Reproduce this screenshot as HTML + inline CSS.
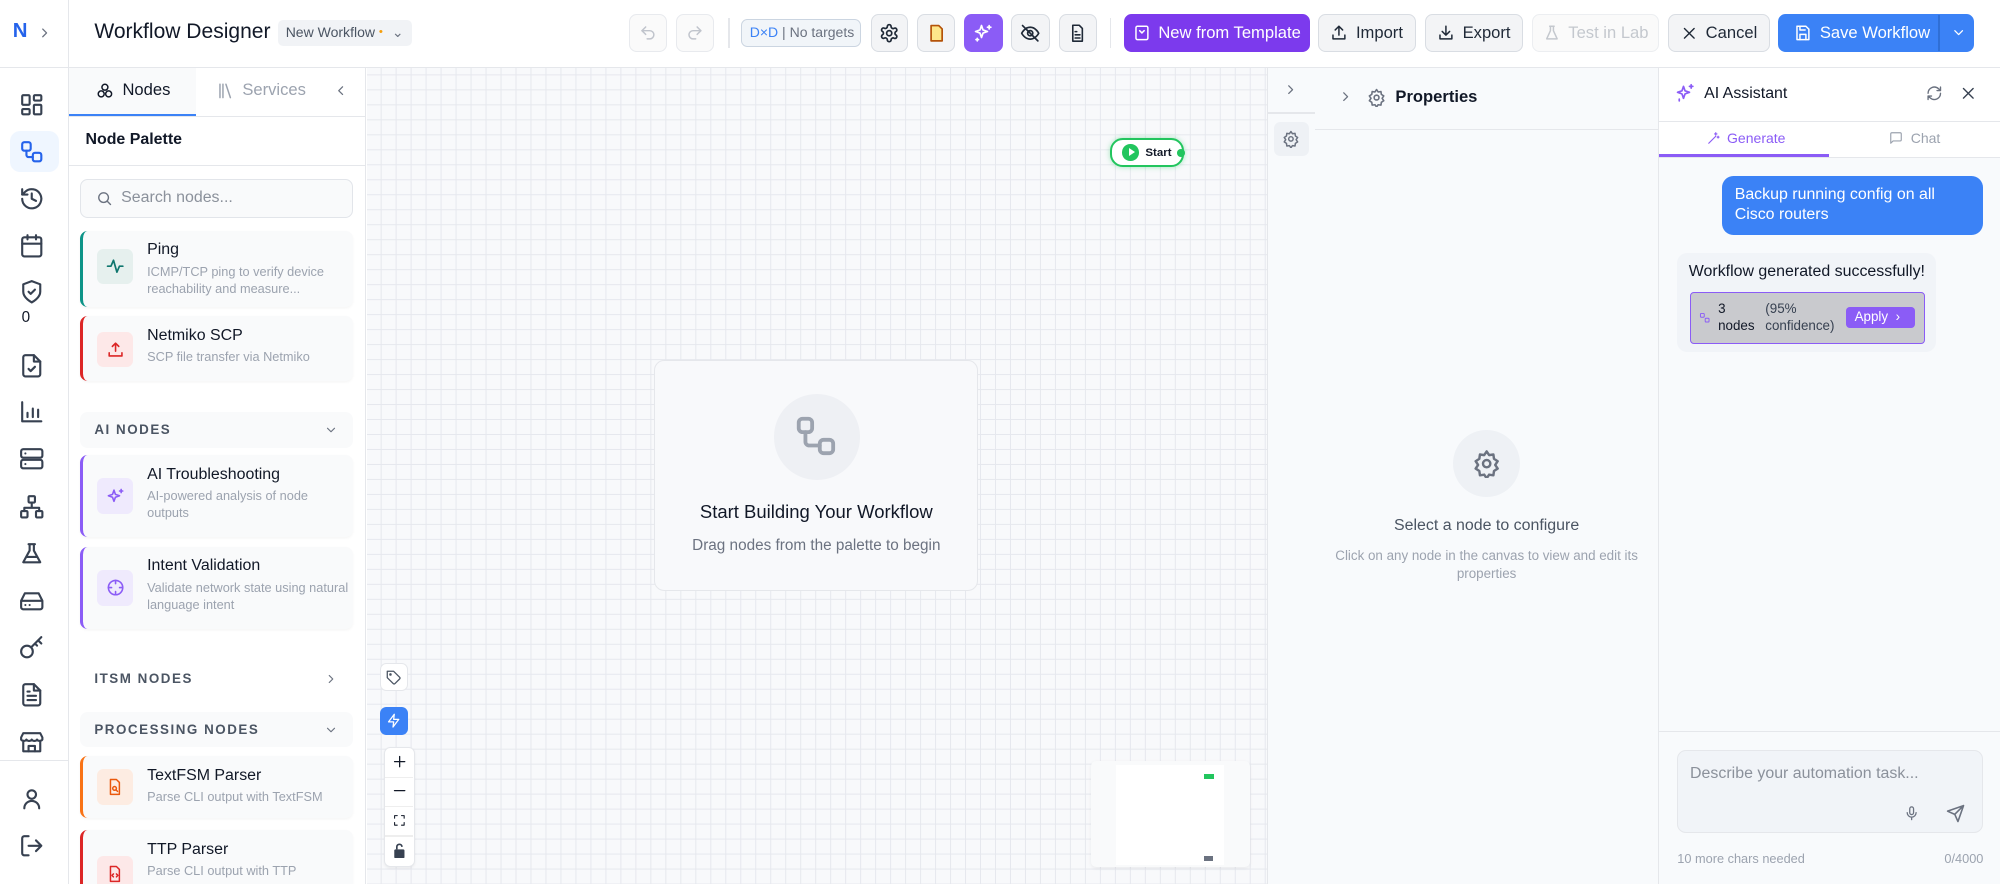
<!DOCTYPE html>
<html><head><meta charset="utf-8">
<style>
*{box-sizing:border-box;margin:0;padding:0}
html,body{width:2000px;height:884px;overflow:hidden;background:#fff}
#root{zoom:1.27551;width:1568px;height:693px;position:relative;font-family:"Liberation Sans",sans-serif;color:#111827;overflow:hidden}
.a{position:absolute}
svg{display:block}
.ic{fill:none;stroke:currentColor;stroke-width:2;stroke-linecap:round;stroke-linejoin:round}
.btn{position:absolute;top:11px;height:30px;border:1px solid #d9dde3;border-radius:6px;background:#f3f4f6;display:flex;align-items:center;justify-content:center;gap:6px;font-size:13px;color:#1f2937}
.side{position:absolute;left:15px;width:20px;height:20px;color:#374151}
.card{position:absolute;left:63px;width:214px;background:#f9fafb;border-radius:6px;border-left:3px solid;box-shadow:0 1px 2px rgba(0,0,0,.04)}
.card .ib{position:absolute;left:11px;top:14px;width:28px;height:28px;border-radius:5px;display:flex;align-items:center;justify-content:center}
.card .t{position:absolute;left:50px;top:8px;font-size:12.5px;color:#111827}
.card .d{position:absolute;left:50px;top:25px;font-size:10px;color:#9ca3af;line-height:13.5px;width:160px}
.sec{position:absolute;left:63px;width:214px;height:28px;border-radius:6px;font-size:10.5px;letter-spacing:1.2px;color:#4b5563;font-weight:bold;padding-left:11px;line-height:28px}
</style></head><body><div id="root">

<!-- header -->
<div class="a" style="left:0;top:0;width:1568px;height:53px;border-bottom:1px solid #e5e7eb;background:#fff"></div>
<div class="a" style="left:10px;top:16px;font-size:16px;font-weight:bold;color:#2563eb">N</div>
<svg class="a ic" style="left:29px;top:19px;color:#6b7280" width="12" height="14" viewBox="0 0 24 24"><path d="M9 6l6 6-6 6"/></svg>
<div class="a" style="left:53px;top:0;width:1px;height:693px;background:#e5e7eb"></div>
<div class="a" style="left:74px;top:16px;font-size:16.5px;color:#111827">Workflow Designer</div>
<div class="a" style="left:218px;top:16px;width:105px;height:20px;background:#f1f3f6;border-radius:4px;font-size:11px;color:#4b5563;line-height:20px;padding-left:6px">New Workflow <span style="color:#f59e0b;font-size:9px;vertical-align:top">•</span> <span style="color:#6b7280;margin-left:4px">⌄</span></div>

<div class="btn" style="left:493px;width:30px;background:#fafafa;border-color:#e8eaee;color:#c0c4cc"><svg class="ic" width="14" height="14" viewBox="0 0 24 24"><path d="M9 14L4 9l5-5"/><path d="M4 9h10.5a5.5 5.5 0 0 1 0 11H11"/></svg></div>
<div class="btn" style="left:530px;width:30px;background:#fafafa;border-color:#e8eaee;color:#c0c4cc"><svg class="ic" width="14" height="14" viewBox="0 0 24 24"><path d="M15 14l5-5-5-5"/><path d="M20 9H9.5a5.5 5.5 0 0 0 0 11H13"/></svg></div>
<div class="a" style="left:571px;top:14px;width:1px;height:24px;background:#e5e7eb"></div>
<div class="a" style="left:581px;top:15px;width:94px;height:22px;border:1px solid #cbd5e1;border-radius:5px;background:#f1f5f9;font-size:11px;line-height:20px;padding-left:6px;color:#6b7280"><span style="color:#3b82f6">D×D</span> | No targets</div>
<div class="btn" style="left:683px;width:29px"><svg class="ic" width="16" height="16" viewBox="0 0 24 24"><circle cx="12" cy="12" r="3"/><path d="M12.2 2h-.4a2 2 0 0 0-2 2v.2a2 2 0 0 1-1 1.7l-.4.3a2 2 0 0 1-2 0l-.2-.1a2 2 0 0 0-2.7.7l-.2.4a2 2 0 0 0 .7 2.7l.2.1a2 2 0 0 1 1 1.7v.5a2 2 0 0 1-1 1.7l-.2.1a2 2 0 0 0-.7 2.7l.2.4a2 2 0 0 0 2.7.7l.2-.1a2 2 0 0 1 2 0l.4.3a2 2 0 0 1 1 1.7V20a2 2 0 0 0 2 2h.4a2 2 0 0 0 2-2v-.2a2 2 0 0 1 1-1.700l.4-.3a2 2 0 0 1 2 0l.2.1a2 2 0 0 0 2.7-.7l.2-.4a2 2 0 0 0-.7-2.7l-.2-.1a2 2 0 0 1-1-1.7v-.5a2 2 0 0 1 1-1.7l.2-.1a2 2 0 0 0 .7-2.7l-.2-.4a2 2 0 0 0-2.7-.7l-.2.1a2 2 0 0 1-2 0l-.4-.3a2 2 0 0 1-1-1.7V4a2 2 0 0 0-2-2z"/></svg></div>
<div class="btn" style="left:719px;width:30px"><svg width="16" height="16" viewBox="0 0 24 24"><path d="M6 3h9l4 4v14H6z" fill="#fde68a" stroke="#b45309" stroke-width="2" stroke-linejoin="round"/></svg></div>
<div class="btn" style="left:756px;width:30px;background:#8b5cf6;border-color:#8b5cf6;color:#fff"><svg class="ic" width="16" height="16" viewBox="0 0 24 24"><path d="M10 3l1.8 5.2L17 10l-5.2 1.8L10 17l-1.8-5.2L3 10l5.2-1.8z"/><path d="M19 3v4M17 5h4M5 18v3M3.5 19.5h3"/></svg></div>
<div class="btn" style="left:793px;width:30px"><svg class="ic" width="16" height="16" viewBox="0 0 24 24"><path d="M2 12s3.5-7 10-7 10 7 10 7-3.5 7-10 7S2 12 2 12z"/><circle cx="12" cy="12" r="3"/><path d="M3 3l18 18"/></svg></div>
<div class="btn" style="left:830px;width:30px"><svg class="ic" width="15" height="16" viewBox="0 0 24 24"><path d="M14 2H6v20h12V6z"/><path d="M9 10h2M9 14h6M9 18h6"/></svg></div>
<div class="a" style="left:870px;top:14px;width:1px;height:24px;background:#e5e7eb"></div>
<div class="btn" style="left:881px;width:146px;background:#7c3aed;border-color:#7c3aed;color:#fff"><svg class="ic" width="14" height="14" viewBox="0 0 24 24"><rect x="4" y="3" width="16" height="18" rx="2"/><path d="M9 9l3 3 3-3"/></svg>New from Template</div>
<div class="btn" style="left:1033px;width:77px"><svg class="ic" width="14" height="14" viewBox="0 0 24 24"><path d="M12 15V3M7 8l5-5 5 5M4 15v5h16v-5"/></svg>Import</div>
<div class="btn" style="left:1117px;width:77px"><svg class="ic" width="14" height="14" viewBox="0 0 24 24"><path d="M12 3v12M7 10l5 5 5-5M4 15v5h16v-5"/></svg>Export</div>
<div class="btn" style="left:1201px;width:100px;background:#fafafa;border-color:#eceef1;color:#c4c8ce"><svg class="ic" width="14" height="14" viewBox="0 0 24 24"><path d="M9 3h6M10 3v6L5 20h14L14 9V3"/></svg>Test in Lab</div>
<div class="btn" style="left:1308px;width:80px"><svg class="ic" width="13" height="13" viewBox="0 0 24 24"><path d="M5 5l14 14M19 5L5 19"/></svg>Cancel</div>
<div class="btn" style="left:1394px;width:154px;background:#3b82f6;border-color:#3b82f6;color:#fff;justify-content:flex-start;padding-left:12px"><svg class="ic" width="14" height="14" viewBox="0 0 24 24"><path d="M5 3h11l4 4v14H4V3z"/><path d="M8 3v5h7M8 21v-7h8v7"/></svg>Save Workflow<div class="a" style="left:125px;top:0;width:1px;height:28px;background:#2f6fd6"></div><svg class="a ic" style="left:135px;top:8px" width="12" height="12" viewBox="0 0 24 24"><path d="M6 9l6 6 6-6"/></svg></div>

<!-- left sidebar -->
<div class="a" style="left:8px;top:103px;width:38px;height:32px;background:#eff6ff;border-radius:8px"></div>
<svg class="side ic" style="top:72px" viewBox="0 0 24 24"><rect x="3" y="3" width="7" height="9" rx="1"/><rect x="14" y="3" width="7" height="5" rx="1"/><rect x="14" y="12" width="7" height="9" rx="1"/><rect x="3" y="16" width="7" height="5" rx="1"/></svg>
<svg class="side ic" style="top:109px;color:#2563eb" viewBox="0 0 24 24"><rect x="3" y="3" width="8" height="8" rx="2"/><rect x="13" y="13" width="8" height="8" rx="2"/><path d="M7 11v4a2 2 0 0 0 2 2h4"/></svg>
<svg class="side ic" style="top:146px" viewBox="0 0 24 24"><path d="M3 12a9 9 0 1 0 3-6.7L3 8"/><path d="M3 3v5h5M12 7v5l4 2"/></svg>
<svg class="side ic" style="top:183px" viewBox="0 0 24 24"><rect x="3" y="4" width="18" height="18" rx="2"/><path d="M16 2v4M8 2v4M3 10h18"/></svg>
<svg class="side ic" style="top:219px" viewBox="0 0 24 24"><path d="M12 22s8-4 8-10V5l-8-3-8 3v7c0 6 8 10 8 10z"/><path d="M9 12l2 2 4-4"/></svg>
<div class="a" style="left:17px;top:242px;font-size:12px;color:#111827">0</div>
<svg class="side ic" style="top:277px" viewBox="0 0 24 24"><path d="M14 2H6a2 2 0 0 0-2 2v16a2 2 0 0 0 2 2h12a2 2 0 0 0 2-2V8z"/><path d="M14 2v6h6M9 15l2 2 4-4"/></svg>
<svg class="side ic" style="top:313px" viewBox="0 0 24 24"><path d="M3 3v18h18M8 17v-4M13 17V9M18 17v-7"/></svg>
<svg class="side ic" style="top:350px" viewBox="0 0 24 24"><rect x="2" y="3" width="20" height="8" rx="2"/><rect x="2" y="13" width="20" height="8" rx="2"/><path d="M6 7h.01M6 17h.01"/></svg>
<svg class="side ic" style="top:387px" viewBox="0 0 24 24"><rect x="9" y="2" width="6" height="6" rx="1"/><rect x="2" y="16" width="6" height="6" rx="1"/><rect x="16" y="16" width="6" height="6" rx="1"/><path d="M5 16v-3h14v3M12 8v5"/></svg>
<svg class="side ic" style="top:424px" viewBox="0 0 24 24"><path d="M9 3h6M10 3v6L4 20h16L14 9V3M7 15h10"/></svg>
<svg class="side ic" style="top:461px" viewBox="0 0 24 24"><path d="M22 12H2M5.5 5h13L22 12v6a2 2 0 0 1-2 2H4a2 2 0 0 1-2-2v-6z"/><path d="M6 16h.01M10 16h.01"/></svg>
<svg class="side ic" style="top:498px" viewBox="0 0 24 24"><circle cx="7.5" cy="15.5" r="5.5"/><path d="M11.5 11.5L21 2M18 5l3 3M15 8l2 2"/></svg>
<svg class="side ic" style="top:535px" viewBox="0 0 24 24"><path d="M14 2H6a2 2 0 0 0-2 2v16a2 2 0 0 0 2 2h12a2 2 0 0 0 2-2V8z"/><path d="M14 2v6h6M8 13h8M8 17h8M8 9h2"/></svg>
<svg class="side ic" style="top:572px" viewBox="0 0 24 24"><path d="M4 10v10h16V10M2 7l2-4h16l2 4v2a3 3 0 0 1-5 0 3 3 0 0 1-5 0 3 3 0 0 1-5 0 3 3 0 0 1-5 0z"/><path d="M9 20v-5h6v5"/></svg>
<div class="a" style="left:0;top:596px;width:53px;height:1px;background:#e5e7eb"></div>
<svg class="side ic" style="top:616px" viewBox="0 0 24 24"><circle cx="12" cy="8" r="4"/><path d="M5 21a7 7 0 0 1 14 0"/></svg>
<svg class="side ic" style="top:653px" viewBox="0 0 24 24"><path d="M9 21H5a2 2 0 0 1-2-2V5a2 2 0 0 1 2-2h4M16 17l5-5-5-5M21 12H9"/></svg>

<!-- palette -->
<div class="a" style="left:54px;top:53px;width:233px;height:640px;background:#fff;border-right:1px solid #e5e7eb"></div>
<div class="a" style="left:54px;top:53px;width:100px;height:39px;background:#f9fafb"></div>
<div class="a" style="left:54px;top:89px;width:100px;height:2px;background:#3b82f6"></div>
<div class="a" style="left:54px;top:91px;width:233px;height:1px;background:#e5e7eb"></div>
<svg class="a ic" style="left:75px;top:64px;color:#111827" width="14" height="14" viewBox="0 0 24 24"><circle cx="12" cy="7" r="4"/><circle cx="7" cy="16" r="4"/><circle cx="17" cy="16" r="4"/></svg>
<div class="a" style="left:96px;top:63px;font-size:13px;color:#111827">Nodes</div>
<svg class="a ic" style="left:170px;top:64px;color:#9ca3af" width="14" height="14" viewBox="0 0 24 24"><path d="M4 3v18M8 3v18M12 3l6 18"/></svg>
<div class="a" style="left:190px;top:63px;font-size:13px;color:#9ca3af">Services</div>
<svg class="a ic" style="left:261px;top:65px;color:#6b7280" width="12" height="12" viewBox="0 0 24 24"><path d="M15 6l-6 6 6 6"/></svg>
<div class="a" style="left:67px;top:103px;font-size:12.5px;font-weight:bold">Node Palette</div>
<div class="a" style="left:54px;top:129px;width:233px;height:1px;background:#e5e7eb"></div>
<div class="a" style="left:63px;top:140px;width:214px;height:31px;border:1px solid #e2e5ea;border-radius:6px;background:#f9fafb"></div>
<svg class="a ic" style="left:75px;top:149px;color:#6b7280" width="13" height="13" viewBox="0 0 24 24"><circle cx="11" cy="11" r="7"/><path d="M21 21l-4.5-4.5"/></svg>
<div class="a" style="left:95px;top:148px;font-size:12.5px;color:#8b919b">Search nodes...</div>

<div class="card" style="top:181px;height:60px;border-color:#0d9488"><div class="ib" style="background:#e6f0ee;color:#0f766e"><svg class="ic" width="16" height="16" viewBox="0 0 24 24"><path d="M3 12h4l3-7 4 14 3-7h4"/></svg></div><div class="t">Ping</div><div class="d">ICMP/TCP ping to verify device reachability and measure...</div></div>
<div class="card" style="top:248px;height:51px;border-color:#dc2626"><div class="ib" style="top:12px;background:#fde8e8;color:#dc2626"><svg class="ic" width="15" height="15" viewBox="0 0 24 24"><path d="M12 14V4M8 8l4-4 4 4M4 16v4h16v-4"/></svg></div><div class="t">Netmiko SCP</div><div class="d">SCP file transfer via Netmiko</div></div>
<div class="sec" style="top:323px;background:#f9fafb">AI NODES<svg class="a ic" style="left:191px;top:9px;color:#6b7280" width="11" height="11" viewBox="0 0 24 24"><path d="M6 9l6 6 6-6"/></svg></div>
<div class="card" style="top:357px;height:64px;border-color:#8b5cf6"><div class="ib" style="top:18px;background:#efeafd;color:#8b5cf6"><svg class="ic" width="15" height="15" viewBox="0 0 24 24"><path d="M10 4l1.8 5.2L17 11l-5.2 1.8L10 18l-1.8-5.2L3 11l5.2-1.8z"/><path d="M19 3v4M17 5h4"/></svg></div><div class="t">AI Troubleshooting</div><div class="d">AI-powered analysis of node outputs</div></div>
<div class="card" style="top:429px;height:64px;border-color:#8b5cf6"><div class="ib" style="top:18px;background:#efeafd;color:#8b5cf6"><svg class="ic" width="15" height="15" viewBox="0 0 24 24"><circle cx="12" cy="12" r="9"/><path d="M12 3v4M12 17v4M3 12h4M17 12h4"/></svg></div><div class="t">Intent Validation</div><div class="d">Validate network state using natural language intent</div></div>
<div class="sec" style="top:518px">ITSM NODES<svg class="a ic" style="left:191px;top:9px;color:#6b7280" width="11" height="11" viewBox="0 0 24 24"><path d="M9 6l6 6-6 6"/></svg></div>
<div class="sec" style="top:558px;background:#f9fafb">PROCESSING NODES<svg class="a ic" style="left:191px;top:9px;color:#6b7280" width="11" height="11" viewBox="0 0 24 24"><path d="M6 9l6 6 6-6"/></svg></div>
<div class="card" style="top:593px;height:48px;border-color:#f97316"><div class="ib" style="top:10px;background:#fdece2;color:#ea580c"><svg class="ic" width="14" height="14" viewBox="0 0 24 24"><path d="M14 2H6v20h12V6z"/><circle cx="11.5" cy="14" r="2.5"/><path d="M13.5 16l2 2"/></svg></div><div class="t">TextFSM Parser</div><div class="d">Parse CLI output with TextFSM</div></div>
<div class="card" style="top:651px;height:50px;border-color:#dc2626"><div class="ib" style="top:20px;background:#fde8e8;color:#dc2626"><svg class="ic" width="14" height="14" viewBox="0 0 24 24"><path d="M14 2H6v20h12V6z"/><path d="M10 12l-2 2 2 2M14 12l2 2-2 2"/></svg></div><div class="t">TTP Parser</div><div class="d">Parse CLI output with TTP</div></div>

<!-- canvas -->
<div class="a" style="left:288px;top:53px;width:705px;height:640px;background-color:#f8f9fb;background-image:linear-gradient(#e6e8ee 0.8px,transparent 0.8px),linear-gradient(90deg,#e6e8ee 0.8px,transparent 0.8px);background-size:11.76px 11.76px;background-position:10.7px 5px"></div>
<div class="a" style="left:513px;top:282px;width:254px;height:181px;background:#f8f9fb;border:1px solid #e5e7eb;border-radius:8px"></div>
<div class="a" style="left:607px;top:309px;width:67px;height:67px;border-radius:50%;background:#eef0f4"></div>
<svg class="a ic" style="left:622px;top:324px;color:#9ca3af" width="36" height="36" viewBox="0 0 24 24"><rect x="3" y="3" width="7" height="7" rx="2"/><rect x="14" y="14" width="7" height="7" rx="2"/><path d="M6.5 10v5a2 2 0 0 0 2 2H14"/></svg>
<div class="a" style="left:513px;top:393px;width:254px;text-align:center;font-size:14.5px;color:#111827">Start Building Your Workflow</div>
<div class="a" style="left:513px;top:421px;width:254px;text-align:center;font-size:12px;color:#6b7280">Drag nodes from the palette to begin</div>
<div class="a" style="left:870px;top:108px;width:58px;height:23px;border:2px solid #22c55e;border-radius:10px;background:#fff;box-shadow:0 0 4px rgba(34,197,94,.4)"></div>
<div class="a" style="left:880px;top:113px;width:13px;height:13px;border-radius:50%;background:#22c55e"></div>
<div class="a" style="left:885px;top:116px;width:0;height:0;border-left:5px solid #fff;border-top:3.5px solid transparent;border-bottom:3.5px solid transparent"></div>
<div class="a" style="left:898px;top:115px;font-size:9px;line-height:10px;font-weight:bold;color:#111827">Start</div>
<div class="a" style="left:923px;top:117px;width:6px;height:6px;border-radius:50%;background:#22c55e"></div>
<div class="a" style="left:298px;top:520px;width:22px;height:22px;background:#fff;border:1px solid #e5e7eb;border-radius:5px"></div>
<svg class="a ic" style="left:303px;top:525px;color:#4b5563" width="12" height="12" viewBox="0 0 24 24"><path d="M12 2H2v10l9.3 9.3a2 2 0 0 0 2.8 0l7.2-7.2a2 2 0 0 0 0-2.8z"/><circle cx="7" cy="7" r="1"/></svg>
<div class="a" style="left:298px;top:554px;width:22px;height:22px;background:#3b82f6;border-radius:5px"></div>
<svg class="a ic" style="left:303px;top:559px;color:#fff" width="12" height="12" viewBox="0 0 24 24"><path d="M13 2L4 14h8l-1 8 9-12h-8z"/></svg>
<div class="a" style="left:301px;top:586px;width:24px;height:94px;background:#fff;border:1px solid #e5e7eb;border-radius:5px;box-shadow:0 1px 2px rgba(0,0,0,.06)"></div>
<div class="a" style="left:302px;top:609px;width:22px;height:1px;background:#eee"></div>
<div class="a" style="left:302px;top:632px;width:22px;height:1px;background:#eee"></div>
<div class="a" style="left:302px;top:655px;width:22px;height:1px;background:#eee"></div>
<svg class="a ic" style="left:307px;top:591px;color:#111827" width="12" height="12" viewBox="0 0 24 24"><path d="M12 4v16M4 12h16"/></svg>
<svg class="a ic" style="left:307px;top:614px;color:#111827" width="12" height="12" viewBox="0 0 24 24"><path d="M4 12h16"/></svg>
<svg class="a ic" style="left:308px;top:638px;color:#111827" width="10" height="10" viewBox="0 0 24 24"><path d="M3 8V3h5M16 3h5v5M21 16v5h-5M8 21H3v-5"/></svg>
<svg class="a" style="left:308px;top:661px" width="10" height="12" viewBox="0 0 10 12"><rect x="1" y="5" width="8" height="7" rx="1" fill="#374151"/><path d="M3 5V3a2 2 0 0 1 4 0" stroke="#374151" stroke-width="1.3" fill="none"/></svg>
<div class="a" style="left:855px;top:597px;width:125px;height:83px;background:#f9fafb;border-radius:4px;box-shadow:0 1px 3px rgba(0,0,0,.06)"></div>
<div class="a" style="left:875px;top:600px;width:85px;height:78px;background:#fff"></div>
<div class="a" style="left:944px;top:607px;width:8px;height:4px;background:#22c55e"></div>
<div class="a" style="left:944px;top:671px;width:7px;height:4px;background:#6b7280"></div>

<!-- properties -->
<div class="a" style="left:993px;top:53px;width:307px;height:640px;background:#f8fafc;border-left:1px solid #e5e7eb"></div>
<div class="a" style="left:993px;top:88px;width:38px;height:1px;background:#e5e7eb"></div>
<div class="a" style="left:1031px;top:101px;width:269px;height:1px;background:#e5e7eb"></div>
<svg class="a ic" style="left:1006px;top:64px;color:#6b7280" width="12" height="12" viewBox="0 0 24 24"><path d="M9 6l6 6-6 6"/></svg>
<div class="a" style="left:999px;top:96px;width:27px;height:26px;background:#eef1f5;border-radius:5px"></div>
<svg class="a ic" style="left:1005px;top:102px;color:#6b7280" width="14" height="14" viewBox="0 0 24 24"><circle cx="12" cy="12" r="3"/><path d="M12 2l2 3 3.5-.5.5 3.5 3 2-2 3 2 3-3 2-.5 3.5L14 21l-2 3-2-3-3.5.5L6 18l-3-2 2-3-2-3 3-2 .5-3.5L10 5z"/></svg>
<svg class="a ic" style="left:1049px;top:70px;color:#6b7280" width="12" height="12" viewBox="0 0 24 24"><path d="M9 6l6 6-6 6"/></svg>
<svg class="a ic" style="left:1072px;top:69px;color:#6b7280" width="15" height="15" viewBox="0 0 24 24"><circle cx="12" cy="12" r="3"/><path d="M12 2l2 3 3.5-.5.5 3.5 3 2-2 3 2 3-3 2-.5 3.5L14 21l-2 3-2-3-3.5.5L6 18l-3-2 2-3-2-3 3-2 .5-3.5L10 5z"/></svg>
<div class="a" style="left:1094px;top:68px;font-size:13px;font-weight:bold">Properties</div>
<div class="a" style="left:1139px;top:337px;width:53px;height:53px;border-radius:50%;background:#eef1f5"></div>
<svg class="a ic" style="left:1154px;top:352px;color:#6b7280" width="23" height="23" viewBox="0 0 24 24"><circle cx="12" cy="12" r="3"/><path d="M12 2l2 3 3.5-.5.5 3.5 3 2-2 3 2 3-3 2-.5 3.5L14 21l-2 3-2-3-3.5.5L6 18l-3-2 2-3-2-3 3-2 .5-3.5L10 5z"/></svg>
<div class="a" style="left:1031px;top:405px;width:269px;text-align:center;font-size:12.5px;color:#4b5563">Select a node to configure</div>
<div class="a" style="left:1041px;top:429px;width:249px;text-align:center;font-size:10.5px;line-height:14px;color:#9ca3af">Click on any node in the canvas to view and edit its properties</div>

<!-- AI panel -->
<div class="a" style="left:1300px;top:53px;width:268px;height:640px;background:#f8fafc;border-left:1px solid #e5e7eb"></div>
<div class="a" style="left:1301px;top:53px;width:267px;height:70px;background:#fff"></div>
<div class="a" style="left:1301px;top:95px;width:267px;height:1px;background:#e5e7eb"></div>
<div class="a" style="left:1301px;top:123px;width:267px;height:1px;background:#e5e7eb"></div>
<div class="a" style="left:1301px;top:121px;width:133px;height:2px;background:#8b5cf6"></div>
<svg class="a ic" style="left:1313px;top:65px;color:#8b5cf6" width="16" height="16" viewBox="0 0 24 24"><path d="M10 4l1.8 5.2L17 11l-5.2 1.8L10 18l-1.8-5.2L3 11l5.2-1.8z"/><path d="M19 2v4M17 4h4M5 19v2"/></svg>
<div class="a" style="left:1336px;top:67px;font-size:12.5px">AI Assistant</div>
<svg class="a ic" style="left:1510px;top:67px;color:#6b7280" width="13" height="13" viewBox="0 0 24 24"><path d="M21 12a9 9 0 0 1-15 6.7L3 16M3 12a9 9 0 0 1 15-6.7L21 8M21 3v5h-5M3 21v-5h5"/></svg>
<svg class="a ic" style="left:1537px;top:67px;color:#374151" width="13" height="13" viewBox="0 0 24 24"><path d="M5 5l14 14M19 5L5 19"/></svg>
<svg class="a ic" style="left:1338px;top:103px;color:#8b5cf6" width="11" height="11" viewBox="0 0 24 24"><path d="M3 21L15 9M15 3v4M13 5h4M19 9v3M17.5 10.5h3"/></svg>
<div class="a" style="left:1354px;top:102px;font-size:11px;color:#8b5cf6">Generate</div>
<svg class="a ic" style="left:1481px;top:103px;color:#9ca3af" width="11" height="11" viewBox="0 0 24 24"><path d="M21 15a2 2 0 0 1-2 2H7l-4 4V5a2 2 0 0 1 2-2h14a2 2 0 0 1 2 2z"/></svg>
<div class="a" style="left:1498px;top:102px;font-size:11px;color:#9ca3af">Chat</div>
<div class="a" style="left:1350px;top:138px;width:205px;height:46px;background:#3b82f6;border-radius:9px;color:#fff;font-size:12.5px;line-height:16px;padding:7px 10px">Backup running config on all Cisco routers</div>
<div class="a" style="left:1315px;top:198px;width:203px;height:78px;background:#f1f4f8;border-radius:8px"></div>
<div class="a" style="left:1324px;top:206px;font-size:12.5px">Workflow generated successfully!</div>
<div class="a" style="left:1325px;top:229px;width:184px;height:41px;background:#c9cace;border:1px solid #8b5cf6;border-radius:3px"></div>
<svg class="a ic" style="left:1332px;top:245px;color:#8b5cf6" width="9" height="9" viewBox="0 0 24 24"><rect x="3" y="3" width="8" height="8" rx="2"/><rect x="13" y="13" width="8" height="8" rx="2"/></svg>
<div class="a" style="left:1347px;top:236px;font-size:10.5px;line-height:13px;color:#111827">3<br>nodes</div>
<div class="a" style="left:1384px;top:236px;font-size:10.5px;line-height:13px;color:#374151">(95%<br>confidence)</div>
<div class="a" style="left:1447px;top:241px;width:54px;height:16px;background:#8b5cf6;border-radius:3px;color:#fff;font-size:10.5px;line-height:16px;padding-left:7px">Apply <span style="margin-left:3px">›</span></div>
<div class="a" style="left:1301px;top:573px;width:267px;height:1px;background:#e5e7eb"></div>
<div class="a" style="left:1315px;top:588px;width:240px;height:65px;background:#f1f4f8;border:1px solid #e5e7eb;border-radius:7px"></div>
<div class="a" style="left:1325px;top:600px;font-size:12.5px;color:#8b919b">Describe your automation task...</div>
<svg class="a ic" style="left:1493px;top:631px;color:#6b7280" width="12" height="13" viewBox="0 0 24 24"><rect x="9" y="2" width="6" height="12" rx="3"/><path d="M5 11a7 7 0 0 0 14 0M12 18v4"/></svg>
<svg class="a ic" style="left:1526px;top:630px;color:#6b7280" width="15" height="15" viewBox="0 0 24 24"><path d="M22 2L11 13M22 2l-7 20-4-9-9-4z"/></svg>
<div class="a" style="left:1315px;top:667px;font-size:10px;color:#9ca3af">10 more chars needed</div>
<div class="a" style="left:1480px;top:667px;width:75px;text-align:right;font-size:10px;color:#9ca3af">0/4000</div>

</div></body></html>
